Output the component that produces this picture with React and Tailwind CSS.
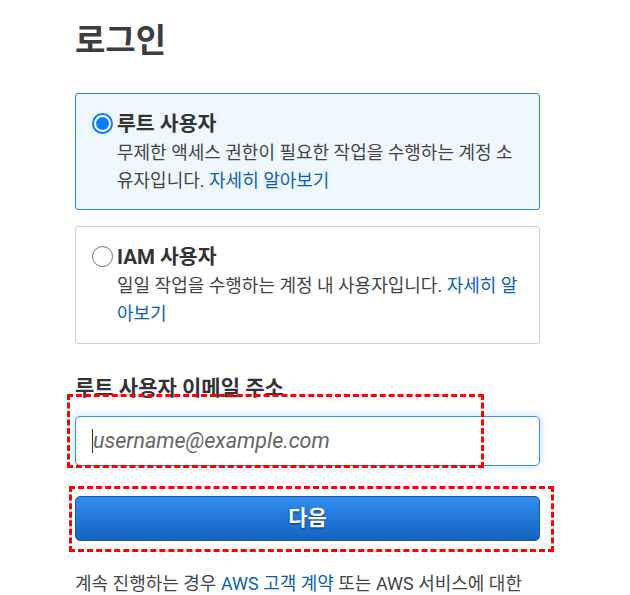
export default function App() {
  return (
    <div
      className="relative min-h-[595px] w-[630px] bg-white text-[#444]"
      style={{ fontFamily: 'Roboto, "Noto Sans CJK KR", sans-serif' }}
    >
      <main className="ml-[75px] w-[465px] pt-[19px]">
        {/* Title */}
        <h1 className="text-[33px] font-bold leading-[44px] text-[#3d3d3d]">로그인</h1>

        {/* Account type */}
        <div className="mt-[30px] flex flex-col gap-4">
          <label className="flex h-[117px] rounded-[3px] border border-[#3183d8] bg-[#f0f8ff] pl-[16px] pr-[16px] pt-[16px]">
            <span className="mt-[3px] flex h-[21px] w-[21px] shrink-0 items-center justify-center rounded-full border-2 border-[#0a7cff] bg-white">
              <span className="h-[13px] w-[13px] rounded-full bg-[#0a7cff]" />
            </span>
            <div className="ml-[4px]">
              <p className="text-[20.5px] font-bold leading-[28px] text-[#333]">루트 사용자</p>
              <p className="mt-[1px] text-[18px] leading-[28px] text-[#444]">
                무제한 액세스 권한이 필요한 작업을 수행하는 계정 소유자입니다.{" "}
                <span className="text-[#0b61b0]">자세히 알아보기</span>
              </p>
            </div>
          </label>

          <label className="flex h-[118px] rounded-[3px] border border-[#cfcfcf] bg-white pl-[16px] pr-[16px] pt-[16px]">
            <span className="mt-[3px] h-[21px] w-[21px] shrink-0 rounded-full border-[1.5px] border-[#6e6e6e] bg-white" />
            <div className="ml-[4px]">
              <p className="text-[20.5px] font-bold leading-[28px] text-[#333]">IAM 사용자</p>
              <p className="mt-[1px] text-[18px] leading-[28px] text-[#444]">
                일일 작업을 수행하는 계정 내 사용자입니다.{" "}
                <span className="text-[#0b61b0]">자세히 알아보기</span>
              </p>
            </div>
          </label>
        </div>

        {/* Email */}
        <p className="mt-[32px] text-[21px] font-bold leading-[24px] text-[#333]">루트 사용자 이메일 주소</p>
        <div className="mt-[16px] flex h-[50px] items-center rounded-[5px] border border-[#3b8fe0] bg-white pl-[16px] shadow-[0_0_8px_rgba(59,143,224,0.35)]">
          <span className="h-[24px] w-px bg-[#333]" />
          <span className="text-[21.5px] italic text-[#666]">username@example.com</span>
        </div>

        {/* Next */}
        <button className="mt-[30px] flex h-[45px] w-full items-center justify-center rounded-[5px] border border-[#17589f] bg-gradient-to-b from-[#2e8ff0] to-[#1663c0] text-[21px] font-bold text-white [text-shadow:0_1px_2px_rgba(0,0,0,0.6)]">
          다음
        </button>

        <p className="mt-[31px] whitespace-nowrap text-[18px] leading-[24px] text-[#444]">
          계속 진행하는 경우 <span className="text-[#0b61b0]">AWS 고객 계약</span> 또는 AWS 서비스에 대한
        </p>
      </main>

      {/* Annotation overlays */}
      <div className="pointer-events-none absolute left-[67px] top-[394px] h-[74px] w-[417px] border-[3px] border-dashed border-[#ff0000]" />
      <div className="pointer-events-none absolute left-[69px] top-[486px] h-[66px] w-[485px] border-[3px] border-dashed border-[#ff0000]" />
    </div>
  );
}
